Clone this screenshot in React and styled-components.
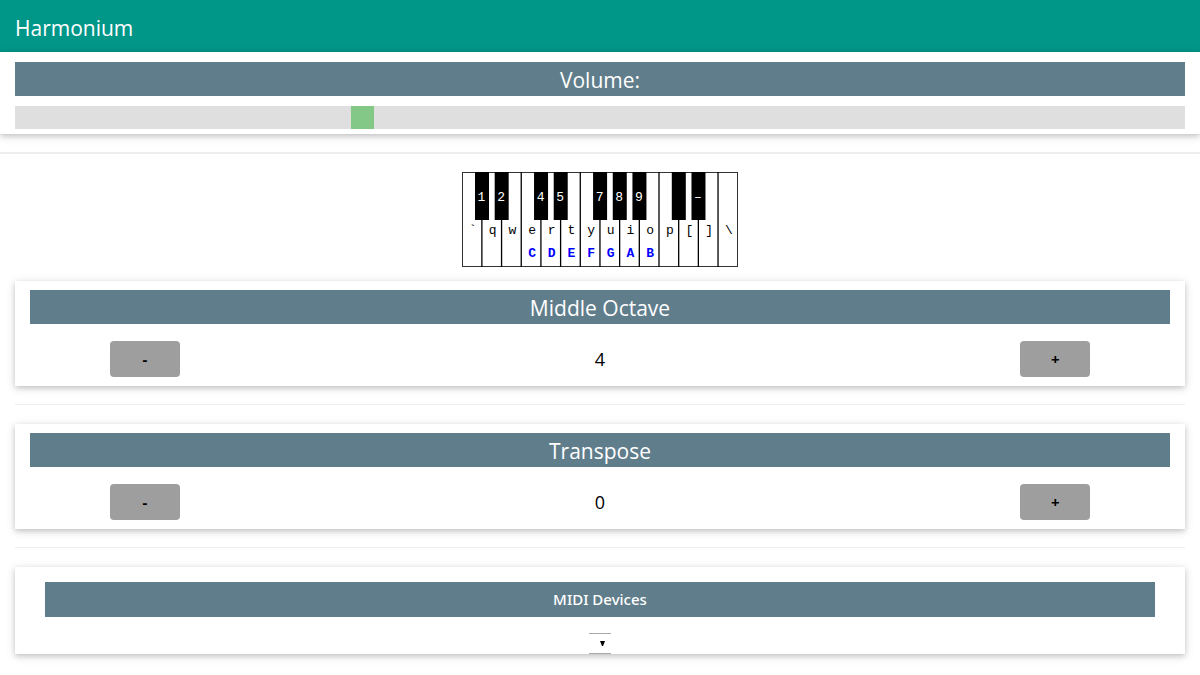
import React, { useState } from "react";
import styled, { createGlobalStyle } from "styled-components";

const GlobalStyle = createGlobalStyle`
  *, *::before, *::after { box-sizing: border-box; }
  body {
    margin: 0;
    background: #fff;
    color: #000;
    font-family: "Noto Sans", Verdana, sans-serif;
    font-size: 15px;
    line-height: 23px;
  }
`;

const cardShadow = "0 2px 5px 0 rgba(0, 0, 0, 0.16), 0 2px 10px 0 rgba(0, 0, 0, 0.12)";

const Header = styled.header`
  padding: 10px 15px 6px;
  background: #009688;
  color: #fff;
`;

const Title = styled.h1`
  margin: 0;
  font-family: "Open Sans", sans-serif;
  font-size: 21px;
  font-weight: 400;
  line-height: 36px;
`;

const VolumePanel = styled.section`
  padding: 10px 15px 5px;
  box-shadow: ${cardShadow};
`;

const Heading = styled.h2`
  display: block;
  margin: 0;
  padding-top: 2px;
  background: #607d8b;
  color: #fff;
  font-family: "Open Sans", sans-serif;
  font-size: 21px;
  font-weight: 400;
  line-height: 32px;
  text-align: center;
`;

const DeviceLabel = styled.label`
  display: block;
  background: #607d8b;
  color: #fff;
  font-weight: 500;
  line-height: 35px;
  text-align: center;
`;

const Slider = styled.input`
  appearance: none;
  display: block;
  width: 100%;
  height: 23px;
  margin: 10px 0 0;
  background: #dfdfdf;
  cursor: pointer;

  &::-webkit-slider-thumb {
    appearance: none;
    width: 23px;
    height: 23px;
    background: #83c887;
  }
`;

const Divider = styled.hr`
  border: 0;
  border-top: ${(p) => p.$weight || 1}px solid #eee;
  margin: 18px 0 ${(p) => (p.$weight ? 18 : 19)}px;
`;

const Main = styled.main`
  padding: 0 15px 20px;
`;

const Keyboard = styled.svg`
  display: block;
  margin: 0 auto 14px;
  font-family: "Courier New", "Liberation Mono", monospace;
  font-size: 13px;
  text-anchor: middle;
`;

const Card = styled.section`
  padding: ${(p) => (p.$inset ? "15px 30px 0" : "9px 15px")};
  box-shadow: ${cardShadow};
`;

const Stepper = styled.div`
  display: flex;
  align-items: center;
  justify-content: space-between;
  padding: 17px 7% 0;
`;

const StepButton = styled.button`
  width: 70px;
  height: 36px;
  border: 0;
  border-radius: 4px;
  background: #9e9e9e;
  color: #000;
  font: 700 15px/36px "Noto Sans", sans-serif;
  padding: 0;
  cursor: pointer;
`;

const StepValue = styled.output`
  font-family: "Open Sans", sans-serif;
  font-size: 18px;
`;

const SelectBox = styled.div`
  position: relative;
  width: 22px;
  margin: 16px auto 0;
`;

const Select = styled.select`
  appearance: none;
  display: block;
  width: 100%;
  height: 21px;
  border: solid #a9a9a9;
  border-width: 1px 0;
  border-radius: 0;
  background: #fff;
`;

const SelectArrow = styled.svg`
  position: absolute;
  right: 6px;
  top: 8px;
  pointer-events: none;
`;

const whiteKeys = ["`", "q", "w", "e", "r", "t", "y", "u", "i", "o", "p", "[", "]", "\\"];
const blackKeys = [
  [0, "1"], [1, "2"], [3, "4"], [4, "5"], [6, "7"],
  [7, "8"], [8, "9"], [10, ""], [11, "–"],
];
const notes = ["C", "D", "E", "F", "G", "A", "B"];
const KEY = 19.68;

function PianoKeys() {
  return (
    <Keyboard width="276" height="95" viewBox="0 0 276 95" role="img" aria-label="Keyboard map">
      <rect x="0.5" y="0.5" width="275" height="94" fill="#fff" stroke="#333" />
      {whiteKeys.map((label, i) => (
        <g key={label}>
          {i > 0 && <line x1={i * KEY + 0.2} x2={i * KEY + 0.2} y1="0" y2="95" stroke="#000" strokeWidth="1.3" />}
          <text x={i * KEY + 11} y="62">{label}</text>
        </g>
      ))}
      {notes.map((note, i) => (
        <text key={note} x={(i + 3) * KEY + 11} y="85" fill="#00f" fontWeight="700">{note}</text>
      ))}
      {blackKeys.map(([i, label]) => (
        <g key={i}>
          <rect x={i * KEY + 13} y="0" width="14" height="48" fill="#000" />
          <text x={i * KEY + 19.5} y="29" fill="#fff">{label}</text>
        </g>
      ))}
    </Keyboard>
  );
}

function StepperCard({ title, initial }) {
  const [value, setValue] = useState(initial);
  return (
    <Card>
      <Heading>{title}</Heading>
      <Stepper>
        <StepButton type="button" aria-label={`Decrease ${title}`} onClick={() => setValue(value - 1)}>-</StepButton>
        <StepValue>{value}</StepValue>
        <StepButton type="button" aria-label={`Increase ${title}`} onClick={() => setValue(value + 1)}>+</StepButton>
      </Stepper>
    </Card>
  );
}

export default function App() {
  return (
    <>
      <GlobalStyle />
      <Header>
        <Title>Harmonium</Title>
      </Header>
      <VolumePanel>
        <Heading as="label" htmlFor="volume">Volume:</Heading>
        <Slider id="volume" type="range" min="0" max="100" step="any" defaultValue="29.3" />
      </VolumePanel>
      <Divider $weight={2} />
      <Main>
        <PianoKeys />
        <StepperCard title="Middle Octave" initial={4} />
        <Divider />
        <StepperCard title="Transpose" initial={0} />
        <Divider />
        <Card $inset>
          <DeviceLabel htmlFor="midi-device">MIDI Devices</DeviceLabel>
          <SelectBox>
            <Select id="midi-device" />
            <SelectArrow width="5" height="5" viewBox="0 0 5 5" aria-hidden="true">
              <path d="M0 0H5L3 5H2Z" fill="#000" />
            </SelectArrow>
          </SelectBox>
        </Card>
      </Main>
    </>
  );
}
